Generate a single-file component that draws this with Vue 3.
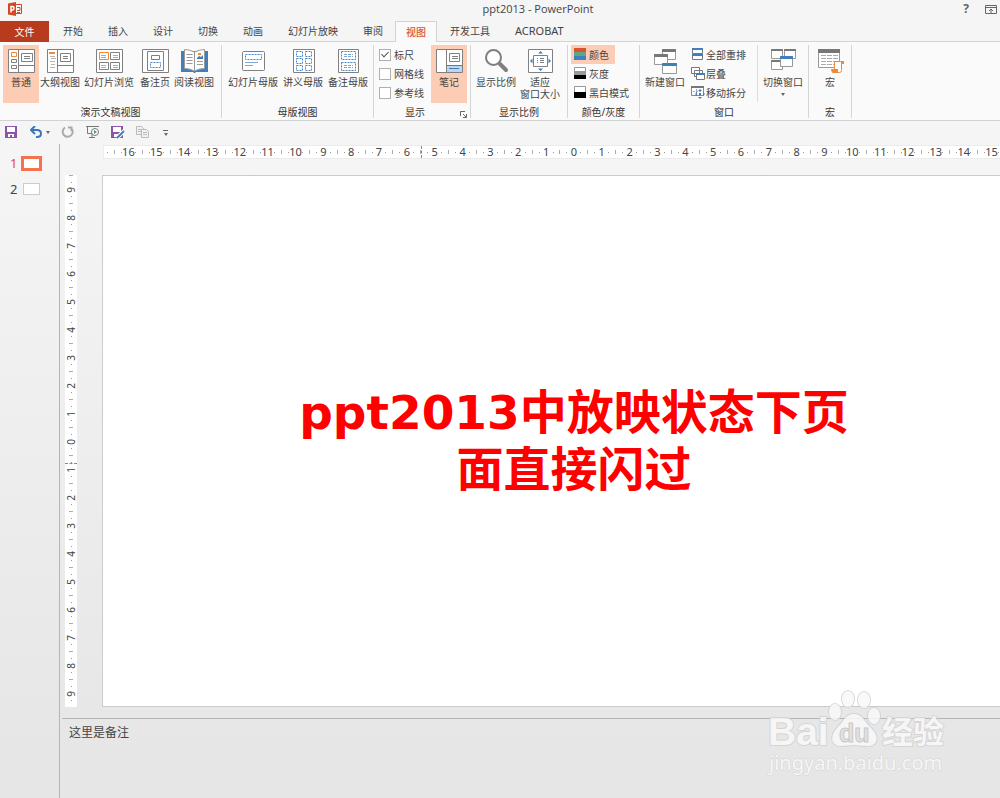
<script setup>
import { ref } from 'vue'

const tabs = [
  { label: '开始' }, { label: '插入' }, { label: '设计' }, { label: '切换' }, { label: '动画' },
  { label: '幻灯片放映' }, { label: '审阅' }, { label: '视图', active: true }, { label: '开发工具' },
  { label: 'ACROBAT', latin: true }
]

const icons = {
  normal: `<g stroke="#808080" fill="#fff"><path d="M.5.5h26v23H.5zM10.500.5v23M10.500 16.500h16"/><path d="M13.500 4.500h11v8h-11zM16 7.500h6M16 9.500h6"/><path d="M3.500 10.500h5v3h-5zM3.500 16.500h5v3h-5z"/><path stroke="#ed8a3c" d="M3.500 3.500h5v4h-5z"/></g>`,
  outline: `<g stroke="#808080" fill="#fff"><path d="M.5.5h26v23H.5zM10.500.5v23M10.500 16.500h16"/><path d="M13.500 4.500h10v8h-10zM16 7.500h5M16 9.500h5"/><path stroke="#ed8a3c" stroke-width="2" d="M2 4h6"/><path stroke="#b5b5b5" d="M3 7.500h5M4 9.500h5M3 12.500h5M4 15.500h4M3 18.500h5"/></g>`,
  sorter: `<g stroke="#808080" fill="#fff"><path d="M.5.5h26v23H.5z"/><path d="M14.500 3.500h9v7h-9zM3.500 13.500h9v7h-9zM14.500 13.500h9v7h-9z"/><path stroke="#ed8a3c" d="M3.500 3.500h9v7h-9z"/><path stroke="#aaa" d="M5 6.500h5M5 8.500h5M17 6.500h5M17 8.500h5M5 16.500h5M17 16.500h5M5 18.500h5M17 18.500h5"/></g>`,
  notespage: `<g stroke="#808080" fill="#fff"><path d="M.5.5h26v23H.5z"/><path d="M5.500 2.500h16v19h-16zM9.500 6.500h8v4h-8z"/><path stroke="#4a86c5" stroke-dasharray="2 1" d="M8.500 13.500h10v5h-10z"/></g>`,
  reading: `<path fill="#3f7fbd" d="M0 2h27v21H15l-1 1h-1l-1-1H0z"/><g stroke="#999" fill="#fff"><path d="M13.500 3Q8 .5 3.500.5v19q6 0 10 2.500 4-2.500 10-2.500V.5Q19 .5 13.500 3zv19"/><path d="M5.500 5.500h6M5.500 8.500h6M5.500 11.500h6M5.500 14.500h6M16 12.500h6M16 15.500h6"/></g><path fill="#3f7fbd" d="M16 9l2-2 2 1 2-2v4h-6z"/><path fill="#ed8a3c" d="M17 4h3v2h-3z"/>`,
  slidemaster: `<rect x="2.500" y="2.500" width="22" height="19" rx="1" stroke="#808080" fill="#fff"/><path fill="none" stroke="#4a86c5" stroke-dasharray="2 1" d="M5.500 5.500h16v5h-16z"/><path stroke="#7ea8d6" d="M5 13.500h13M5 16.500h8"/>`,
  handout: `<path stroke="#808080" fill="#fff" d="M3.500.5h21v23h-21z"/><path fill="none" stroke="#4a86c5" stroke-dasharray="2 1" d="M6.500 2.500h6v5h-6zM15.500 2.500h6v5h-6zM6.500 9.500h6v5h-6zM15.500 9.500h6v5h-6zM6.500 16.500h6v5h-6zM15.500 16.500h6v5h-6z"/>`,
  notesmaster: `<path stroke="#808080" fill="#fff" d="M3.500.5h20v23h-20z"/><path fill="none" stroke="#4a86c5" stroke-dasharray="2 1" d="M6.500 2.500h14v8h-14zM6.500 13.500h14v8h-14z"/><path stroke="#7ea8d6" stroke-dasharray="3 1" d="M9 5.500h9M9 7.500h9M9 16.500h9M9 18.500h9"/>`,
  notes: `<path stroke="#808080" fill="#fff" d="M.5.5h26v23H.5zM10.500.5v23"/><path stroke="#808080" fill="#fff" d="M13.500 4.500h10v8h-10zM16 7.500h6M16 9.500h6"/><path fill="#bcd6ee" d="M11 17h15v6H11z"/><path stroke="#3f7fbd" stroke-width="1" d="M11 16.500h15"/><path stroke="#3f7fbd" d="M13 19.500h10"/>`,
  zoom: `<circle cx="10.500" cy="8.500" r="7.500" fill="#fff" stroke="#7f7f7f" stroke-width="2"/><path stroke="#7f7f7f" stroke-width="4" stroke-linecap="round" d="M17 15l6 6"/>`,
  fit: `<path stroke="#808080" fill="#fff" d="M1.500.5h24v23h-24z"/><path stroke="#808080" fill="#fff" d="M6.500 6.500h14v11h-14zM13 9.500h4M13 11.500h4M13 13.500h4M10 9.500h1M10 11.500h1M10 13.500h1"/><path fill="#3f7fbd" d="M13.500 2l2.500 2.500h-5zM13.500 22l2.500-2.500h-5zM3 12l2.500-2.500v5zM24 12l-2.500-2.500v5z"/>`,
  newwindow: `<g stroke="#999" fill="#fff"><path d="M10.500.5h13v10h-13z"/><path fill="#777" stroke="#777" d="M10.500.5h13v2h-13z"/><path d="M2.500 5.500h13v10h-13z"/><path fill="#777" stroke="#777" d="M2.500 5.500h13v2h-13z"/><path d="M10.500 14.500h14v10h-14z"/><path fill="#3f7fbd" stroke="#3f7fbd" d="M10.500 14.500h14v2h-14z"/></g>`,
  switchwindow: `<g stroke="#999" fill="#fff"><path d="M1.500.5h11v9h-11zM14.500.5h11v9h-11zM1.500 11.500h11v9h-11z"/><path fill="#777" stroke="#777" d="M1.500.5h11v1h-11zM14.500.5h11v1h-11zM1.500 11.500h11v1h-11z"/><path d="M10.500 7.500h12v10h-12z"/><path fill="#3f7fbd" stroke="#3f7fbd" d="M10.500 7.500h12v2h-12z"/></g>`,
  macro: `<path stroke="#999" fill="#fff" d="M1.500.5h21v18h-21z"/><path fill="#777" d="M1 0h22v4H1z"/><path stroke="#aaa" stroke-dasharray="5 1" d="M4 6.500h17M4 9.500h17M4 12.500h17M4 15.500h17"/><path fill="#fff" stroke="#ed8a3c" d="M17.500 12.500h8q1.500 0 1 2h-2v7q0 2-2 2h-7l2-2z"/><path fill="#ed8a3c" d="M14 20h7v3h-6q-1-1-1-3zM24 12h3v3h-3z"/>`,
  color: `<path fill="#d9532f" d="M0 0h12v4H0z"/><path fill="#62a583" d="M0 4h12v4H0z"/><path fill="#3f7fbd" d="M0 8h12v4H0z"/>`,
  gray: `<path fill="#fff" stroke="#999" d="M.5.5h11v11H.5z"/><path fill="#999" d="M0 4h12v4H0z"/><path d="M0 8h12v4H0z"/>`,
  mono: `<path fill="#fff" stroke="#999" d="M.5.5h11v11H.5z"/><path d="M0 6h12v6H0z"/>`,
  arrange: `<path fill="#fff" stroke="#777" d="M1.500.5h10v5h-10zM1.500 6.500h10v5h-10z"/><path fill="#3f7fbd" d="M1 0h11v2H1zM1 6h11v2H1z"/>`,
  cascade: `<g fill="#fff" stroke="#777"><path d="M.5.5h8v6h-8zM3.500 3.500h8v6h-8z"/><path d="M5.500 6.500h8v6h-8z"/></g><path fill="#3f7fbd" d="M5 6h9v2H5z"/>`,
  split: `<path fill="#fff" stroke="#888" d="M.5.5h12v9H.5z"/><path fill="#777" d="M0 0h13v2H0z"/><path stroke="#aaa" stroke-dasharray="2 1" d="M2 5.500h9M5.500 3v6"/><path fill="#3f7fbd" d="M9 3l2 2H7zM9 13l2-2H7zM4 8l2-2v4zM14 8l-2-2v4zM8 7h2v2H8z"/>`,
  save: `<path fill="#8b55a8" d="M0 0h12v12H0z"/><path fill="#fff" d="M2 1h8v5H2zM3 8h6v3H7V9H5v2H3z"/>`,
  undo: `<path fill="none" stroke="#3c76b8" stroke-width="2" d="M1 4h6q4 0 4 3.500T7 11H6M5 0L1 4 5 8"/>`,
  redo: `<path fill="none" stroke="#aaa" stroke-width="2" d="M7 1.500h3.500V5M10 2a5 5 0 1 1-6-.5"/>`,
  present: `<path fill="none" stroke="#777" d="M0 .5h13M1.500 1v6.500H6M6 8v3M3 11.500h6"/><circle cx="9" cy="6" r="3.500" fill="#fff" stroke="#777"/><path fill="#3f9f78" d="M8 4l3 2-3 2z"/>`,
  saveas: `<path fill="#8b55a8" d="M0 0h12v12H0z"/><path fill="#fff" d="M2 1h8v5H2zM3 8h4v3H3z"/><path stroke="#fff" stroke-width="4" d="M6 12l7-7"/><path stroke="#3f7fbd" stroke-width="2" d="M6 12l7-7"/>`,
  copy: `<g fill="#f4f0f2" stroke="#bbb"><path d="M.5.5h5l2 2v6h-7zM2 3.500h4M2 5.500h4"/><path d="M5.500 3.500h5l2 2v6h-7zM7 6.500h4M7 8.500h4"/></g>`
}

const presentationViews = [
  { label: '普通', icon: 'normal', size: 'w36', on: true },
  { label: '大纲视图', icon: 'outline', size: 'w42' },
  { label: '幻灯片浏览', icon: 'sorter', size: 'w56' },
  { label: '备注页', icon: 'notespage', size: 'w36' },
  { label: '阅读视图', icon: 'reading', size: 'w42' }
]
const masterViews = [
  { label: '幻灯片母版', icon: 'slidemaster', size: 'w56' },
  { label: '讲义母版', icon: 'handout', size: 'w42' },
  { label: '备注母版', icon: 'notesmaster', size: 'w46' }
]
const checks = ref([
  { id: 'ruler', label: '标尺', on: true },
  { id: 'grid', label: '网格线', on: false },
  { id: 'guides', label: '参考线', on: false }
])
const colorModes = [
  { label: '颜色', icon: 'color', on: true },
  { label: '灰度', icon: 'gray' },
  { label: '黑白模式', icon: 'mono' }
]
const windowTools = [
  { label: '全部重排', icon: 'arrange' },
  { label: '层叠', icon: 'cascade' },
  { label: '移动拆分', icon: 'split' }
]
const horizontal = Array.from({ length: 32 }, (_, i) => Math.abs(i - 16))
const vertical = Array.from({ length: 19 }, (_, i) => Math.abs(i - 9))
const notes = ref('这里是备注')
</script>

<template>
  <div class="app">
    <header class="titlebar">
      <svg class="logo" viewBox="0 0 14 14" aria-hidden="true">
        <path fill="#fff" stroke="#d24726" d="M7 2.500h6.500v9H7z" />
        <path fill="none" stroke="#d24726" d="M9 5.500h3v3H9M9 10.500h3" />
        <path fill="#d24726" d="M0 1.500L8 0v14l-8-1.500z" />
        <path fill="none" stroke="#fff" stroke-width="1.500" d="M3 10.500v-6h1.500q1.500 0 1.500 1.700T4.500 8H3" />
      </svg>
      <span class="doc">ppt2013 - PowerPoint</span>
      <div class="winctl">
        <button aria-label="帮助" class="help">?</button>
        <button aria-label="功能区显示选项">
          <svg width="12" height="9" viewBox="0 0 12 9"><path fill="none" stroke="#666" d="M.5.5h11v8H.5zM1 2.500h10M6 8V4M4 6l2-2 2 2" /></svg>
        </button>
      </div>
    </header>

    <nav class="tabs">
      <button class="file">文件</button>
      <button v-for="t in tabs" :key="t.label" class="tab" :class="{ active: t.active, latin: t.latin }">{{ t.label }}</button>
    </nav>

    <section class="ribbon">
      <div class="group g-views">
        <div class="body">
          <button v-for="b in presentationViews" :key="b.label" class="big" :class="[b.size, { on: b.on }]">
            <svg class="ico" viewBox="0 0 27 25" v-html="icons[b.icon]" />{{ b.label }}
          </button>
        </div>
        <div class="caption">演示文稿视图</div>
      </div>
      <div class="group g-master">
        <div class="body">
          <button v-for="b in masterViews" :key="b.label" class="big" :class="b.size">
            <svg class="ico" viewBox="0 0 27 25" v-html="icons[b.icon]" />{{ b.label }}
          </button>
        </div>
        <div class="caption">母版视图</div>
      </div>
      <div class="group g-show">
        <div class="body">
          <div class="stack checks">
            <label v-for="c in checks" :key="c.id" class="check"><input v-model="c.on" type="checkbox" />{{ c.label }}</label>
          </div>
          <button class="big w36 on"><svg class="ico" viewBox="0 0 27 25" v-html="icons.notes" />笔记</button>
        </div>
        <div class="caption with-launcher">
          显示
          <button class="launcher" aria-label="网格设置">
            <svg width="7" height="7" viewBox="0 0 7 7"><path fill="none" stroke="#666" d="M.5 5V.5H5M3 3l3 3M6.500 3v3.500H3" /></svg>
          </button>
        </div>
      </div>
      <div class="group g-zoom">
        <div class="body">
          <button class="big w46"><svg class="ico" viewBox="0 0 27 25" v-html="icons.zoom" />显示比例</button>
          <button class="big w42"><svg class="ico" viewBox="0 0 27 25" v-html="icons.fit" />适应<br />窗口大小</button>
        </div>
        <div class="caption">显示比例</div>
      </div>
      <div class="group g-color">
        <div class="body">
          <div class="stack">
            <button v-for="m in colorModes" :key="m.label" class="small" :class="{ on: m.on }">
              <svg class="mini" viewBox="0 0 14 13" v-html="icons[m.icon]" />{{ m.label }}
            </button>
          </div>
        </div>
        <div class="caption">颜色/灰度</div>
      </div>
      <div class="group g-window">
        <div class="body">
          <button class="big w46"><svg class="ico" viewBox="0 0 27 25" v-html="icons.newwindow" />新建窗口</button>
          <div class="stack tools">
            <button v-for="m in windowTools" :key="m.label" class="small">
              <svg class="mini" viewBox="0 0 14 13" v-html="icons[m.icon]" />{{ m.label }}
            </button>
          </div>
          <button class="big w46"><svg class="ico" viewBox="0 0 27 25" v-html="icons.switchwindow" />切换窗口<i class="caret"></i></button>
        </div>
        <div class="caption">窗口</div>
      </div>
      <div class="group g-macro">
        <div class="body">
          <button class="big w36"><svg class="ico" viewBox="0 0 27 25" v-html="icons.macro" />宏</button>
        </div>
        <div class="caption">宏</div>
      </div>
    </section>

    <div class="qat">
      <button aria-label="保存"><svg class="mini" viewBox="0 0 14 13" v-html="icons.save" /></button>
      <button aria-label="撤消" class="undo"><svg class="mini" viewBox="0 0 14 13" v-html="icons.undo" /><i class="caret"></i></button>
      <button aria-label="重复"><svg class="mini" viewBox="0 0 14 13" v-html="icons.redo" /></button>
      <button aria-label="从头开始放映"><svg class="mini" viewBox="0 0 14 13" v-html="icons.present" /></button>
      <button aria-label="另存为"><svg class="mini" viewBox="0 0 14 13" v-html="icons.saveas" /></button>
      <button aria-label="复制"><svg class="mini" viewBox="0 0 14 13" v-html="icons.copy" /></button>
      <button aria-label="自定义快速访问工具栏" class="more"><i class="caret"></i></button>
    </div>

    <main class="work">
      <aside class="thumbs">
        <button class="thumb current"><span>1</span><i></i></button>
        <button class="thumb"><span>2</span><i></i></button>
      </aside>
      <div class="editor">
        <div class="canvas">
          <div class="hruler">
            <i class="dot lead"></i>
            <div v-for="(n, i) in horizontal" :key="i" class="unit"><i class="tick"></i><i class="dot"></i><b>{{ n }}</b><i class="dot"></i></div>
            <span class="marker"></span>
          </div>
          <div class="vruler">
            <div v-for="(n, i) in vertical" :key="i" class="unit"><i class="tick"></i><i class="dot"></i><b>{{ n }}</b><i class="dot"></i></div>
            <span class="marker"></span>
          </div>
          <article class="slide"><h1>ppt2013中放映状态下页面直接闪过</h1></article>
        </div>
        <textarea v-model="notes" class="notes" aria-label="备注"></textarea>
        <svg class="watermark" width="184" height="92" viewBox="0 0 184 92">
          <g fill="#f9f9f9" stroke="#d2d2d2" paint-order="stroke" stroke-width="2" stroke-linejoin="round">
            <text x="4" y="60" class="wm-brand">Bai</text>
            <ellipse cx="71" cy="27" rx="6" ry="8" />
            <ellipse cx="84" cy="14" rx="6" ry="8" />
            <ellipse cx="100" cy="15" rx="6" ry="8" />
            <ellipse cx="110" cy="31" rx="6" ry="8" />
            <path d="M90 29C98 29 100 36 106 42C116 51 114 61 104 61C98 61 94 60 90 60C86 60 82 61 77 61C67 61 65 51 74 42C80 36 82 29 90 29z" />
            <text x="118" y="58" class="wm-cn">经验</text>
            <text x="5" y="85" class="wm-url">jingyan.baidu.com</text>
          </g>
          <text x="75" y="57" class="wm-du">du</text>
        </svg>
      </div>
    </main>
  </div>
</template>

<style>
html, body { margin: 0; }
</style>

<style scoped>
.app {
  display: flex; flex-direction: column; min-height: 100vh; overflow: hidden;
  background: linear-gradient(#f5f5f5 20%, #e6e6e6 95%);
  color: #444; font: 10px/12px "Noto Sans", "Noto Sans CJK SC", sans-serif;
}
.app * { box-sizing: border-box; }
button { font: inherit; color: inherit; background: none; border: 0; padding: 0; margin: 0; }
i { display: block; }

.titlebar { display: flex; align-items: center; justify-content: space-between; height: 21px; padding: 0 3px 3px 8px; position: relative; }
.logo { width: 14px; height: 14px; }
.doc { position: absolute; left: 0; right: 0; padding-left: 76px; text-align: center; font: 11px/16px "Open Sans", sans-serif; }
.winctl { display: flex; align-items: center; gap: 16px; position: relative; }
.winctl button { display: flex; }
.winctl .help { font-size: 12px; font-weight: 700; color: #666; }

.tabs { display: flex; height: 21px; border-bottom: 1px solid #d2d2d2; }
.tabs button { height: 20px; }
.file { width: 49px; margin-right: 2px; background: #b83b1d; color: #fff; }
.tabs .file { height: 21px; }
.tab { padding: 0 12px; margin-right: 1px; }
.tab.latin { font-size: 11px; }
.tabs .tab.active { height: 21px; padding: 0 10px; margin: 0 1px 0 -1px; background: #fafafa; border: 1px solid #d2d2d2; border-bottom: 0; color: #d9532f; font-weight: 500; }

.ribbon { display: flex; background: #fafafa; border-bottom: 1px solid #d2d2d2; padding: 3px 0 2px; }
.group { border-right: 1px solid #d5d5d5; height: 73px; }
.g-views { width: 222px; }
.g-master { width: 152px; }
.g-show { width: 97px; }
.g-zoom { width: 97px; }
.g-color { width: 72px; }
.g-window { width: 169px; }
.g-macro { width: 43px; }
.body { display: flex; height: 61px; padding-left: 3px; }
.g-master .body { gap: 1px; }
.g-show .body { padding-left: 5px; }
.g-zoom .body, .g-window .body { padding-left: 2px; }
.caption { text-align: center; color: #333; }
.with-launcher { display: flex; justify-content: center; position: relative; padding-right: 14px; }
.launcher { position: absolute; right: 3px; bottom: 0; display: flex; }
.big { display: flex; flex-direction: column; align-items: center; height: 58px; padding-top: 4px; white-space: nowrap; }
.ico { width: 27px; height: 25px; flex: none; margin-bottom: 2px; fill: none; }
.w36 { width: 36px; }
.w42 { width: 42px; }
.w46 { width: 46px; }
.w56 { width: 56px; }
.on { background: #fcccb4; }
.stack { display: flex; flex-direction: column; align-items: flex-start; }
.checks { width: 52px; }
.check { display: flex; align-items: center; gap: 3px; height: 19px; white-space: nowrap; }
.check input {
  appearance: none; width: 12px; height: 12px; margin: 0; border: 1px solid #b0b0b0; background: #fff;
  display: grid; place-items: center;
}
.check input:checked::after { content: ""; width: 3px; height: 6px; border: solid #555; border-width: 0 1px 1px 0; transform: rotate(45deg); margin-bottom: 2px; }
.small { display: flex; align-items: center; gap: 1px; height: 19px; padding: 0 6px 0 3px; white-space: nowrap; }
.mini { width: 14px; height: 13px; flex: none; }
.tools { width: 70px; border-right: 1px solid #ddd; height: 57px; margin-right: 2px; }
.tools .small { padding: 0 0 0 3px; gap: 1px; }
.caret { width: 0; height: 0; border: 2px solid transparent; border-top: 3px solid #666; border-bottom: 0; }
.big .caret { margin-top: 5px; }

.qat { display: flex; align-items: center; gap: 11px; height: 23px; padding-left: 5px; }
.qat button { display: flex; align-items: center; }
.undo { gap: 2px; }
.more { flex-direction: column; gap: 2px; margin-left: 2px; }
.more::before { content: ""; width: 5px; height: 1px; background: #666; }

.work { display: flex; flex: 1; }
.thumbs { width: 60px; border-right: 1px solid #b5b5b5; padding: 10px 0 0 10px; }
.thumb { display: flex; align-items: center; height: 18px; margin-bottom: 8px; font-size: 13px; gap: 4px; }
.thumb i { width: 17px; height: 12px; margin: 0 2px; background: #fff; border: 1px solid #ccc; }
.thumb.current { color: #e0522f; }
.thumb.current i { width: 21px; height: 15px; margin: 0; border: 3px solid #f5724c; }

.editor { flex: 1; display: flex; flex-direction: column; min-width: 0; position: relative; padding-left: 2px; }
.canvas {
  flex: 1; display: grid; grid-template-columns: 12px 1fr; grid-template-rows: 12px 1fr;
  gap: 17px 25px; padding: 2px 0 11px 3px; overflow: hidden; min-height: 560px;
}
.hruler { grid-column: 2; display: flex; align-items: center; background: #fff; margin: 0 -2px 0 2px; position: relative; outline: 1px solid #ebebeb; }
.unit { flex: 1 1 0; min-width: 0; min-height: 0; display: grid; grid-template-columns: repeat(4, 1fr); place-items: center; }
.unit b { font-weight: 400; font-size: 11px; line-height: 12px; width: 0; display: flex; justify-content: center; }
.tick { width: 1px; height: 4px; background: #aaa; }
.dot { width: 1px; height: 1px; background: #999; }
.lead { margin: 0 3px; }
.marker { position: absolute; left: 317px; top: 0; bottom: 0; border-left: 1px dashed #e3694c; }
.vruler { grid-row: 2; display: flex; flex-direction: column; background: #fff; overflow: hidden; position: relative; padding-bottom: 3px; }
.vruler .unit { grid-template: repeat(4, 1fr) / 1fr; }
.vruler .unit:first-of-type { margin-top: -3px; }
.vruler .unit b { height: 0; align-items: center; transform: rotate(-90deg); font-size: 10px; }
.vruler .tick { width: 4px; height: 1px; }
.vruler .marker { left: 0; right: 0; top: 288px; bottom: auto; border-left: 0; border-top: 1px dashed #e3694c; }
.slide { background: #fff; border: 1px solid #ccc; margin-right: -46px; display: grid; place-items: center; }
h1 {
  margin: 0; max-width: 570px; text-align: center; color: #f00; word-break: break-all;
  font: 700 47px/57px "DejaVu Sans", "Noto Sans CJK SC", sans-serif;
}
.notes {
  display: block; height: 80px; border: 0; border-top: 1px solid #b5b5b5; resize: none; outline: 0; background: none;
  color: #444; padding: 5px 7px; font: 12px/17px "Noto Sans", "Noto Sans CJK SC", sans-serif;
}
.watermark { position: absolute; right: 52px; bottom: 21px; pointer-events: none; opacity: .85; }
.wm-brand { font: 700 39px "Liberation Sans", sans-serif; }
.wm-cn { font: 700 31px "Noto Sans CJK SC", sans-serif; }
.wm-url { font: 20px "Noto Sans", sans-serif; stroke-width: 1px; }
.wm-du { font: 700 25px "Liberation Sans", sans-serif; fill: #e2e2e2; stroke: #c4c4c4; stroke-width: 1px; }
</style>
